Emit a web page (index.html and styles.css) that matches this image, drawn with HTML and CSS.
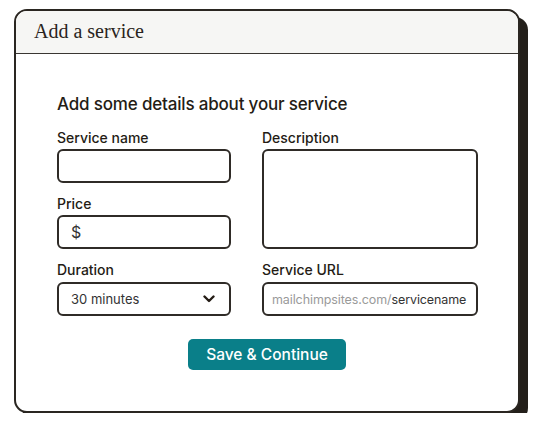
FILE: index.html
```html
<!DOCTYPE html>
<html>
<head>
<meta charset="utf-8">
<link rel="stylesheet" href="styles.css">
</head>
<body>
<div class="card">
  <div class="card-header">Add a service</div>
  <div class="card-body">
    <h2 class="heading">Add some details about your service</h2>
    <div class="form-grid">
      <div class="field f-name">
        <label class="label">Service name</label>
        <div class="input"></div>
      </div>
      <div class="field f-desc">
        <label class="label">Description</label>
        <div class="input textarea"></div>
      </div>
      <div class="field f-price">
        <label class="label">Price</label>
        <div class="input"><span class="dollar">$</span></div>
      </div>
      <div class="field f-dur">
        <label class="label">Duration</label>
        <div class="input select">
          <span class="select-text">30 minutes</span>
          <svg class="chev" width="12" height="8" viewBox="0 0 12 8"><path d="M1.5 1.5 L6 6 L10.5 1.5" fill="none" stroke="#241c15" stroke-width="2.4" stroke-linecap="round" stroke-linejoin="round"/></svg>
        </div>
      </div>
      <div class="field f-url">
        <label class="label">Service URL</label>
        <div class="input url"><span class="url-muted">mailchimpsites.com/</span><span class="url-dark">servicename</span></div>
      </div>
    </div>
    <div class="actions">
      <button class="btn">Save &amp; Continue</button>
    </div>
  </div>
</div>
</body>
</html>
```
FILE: styles.css
```css
* { box-sizing: border-box; }
html, body { margin: 0; background: #fff; }
body {
  padding: 9px 0 0 14px;
  font-family: "Inter", "Liberation Sans", sans-serif;
  color: #241c15;
}
.card {
  width: 506px;
  height: 404px;
  border: 2px solid #2a2621;
  border-radius: 13px;
  background: #fff;
  box-shadow: 8px 8px 0 #231f1a;
  overflow: hidden;
  display: flex;
  flex-direction: column;
}
.card-header {
  height: 43px;
  background: #f6f6f4;
  border-bottom: 1.5px solid #3a3632;
  font-family: "Liberation Serif", serif;
  font-size: 20px;
  line-height: 41px;
  padding-left: 18px;
  color: #2a2420;
}
.card-body {
  padding: 39px 39px 0 41px;
}
.heading {
  margin: 0 0 14px 0;
  font-size: 17px;
  line-height: 22px;
  font-weight: 500;
  letter-spacing: -0.18px;
}
.form-grid {
  display: grid;
  grid-template-columns: 174px 216px;
  column-gap: 31px;
  row-gap: 12px;
  grid-template-areas:
    "name desc"
    "price desc"
    "dur url";
}
.f-name { grid-area: name; }
.f-desc { grid-area: desc; }
.f-price { grid-area: price; }
.f-dur { grid-area: dur; }
.f-url { grid-area: url; }
.field {
  display: flex;
  flex-direction: column;
}
.label {
  font-size: 14px;
  line-height: 18px;
  font-weight: 500;
  margin-bottom: 2px;
}
.f-dur .label, .f-url .label { margin-bottom: 3px; }
.input {
  height: 34px;
  border: 2px solid #2f2b27;
  border-radius: 6px;
  display: flex;
  align-items: center;
  padding: 0 12px;
}
.textarea { height: auto; flex: 1; }
.dollar { font-size: 16px; color: #333; }
.select { justify-content: space-between; padding: 0 14px 0 12px; }
.select-text { font-size: 13px; color: #333; }
.chev { display: block; }
.url { padding: 0 8px; font-size: 12.5px; white-space: nowrap; letter-spacing: -0.1px; }
.url-muted { color: #9a9a9a; }
.url-dark { color: #333; }
.actions {
  display: flex;
  justify-content: center;
  padding: 23px 0 0 0;
  margin-left: -2px;
}
.btn {
  width: 158px;
  height: 31px;
  background: #0a7f89;
  color: #fff;
  border: 0;
  border-radius: 5px;
  font-family: "Inter", "Liberation Sans", sans-serif;
  font-size: 15.5px;
  font-weight: 500;
  padding: 0;
}
```
